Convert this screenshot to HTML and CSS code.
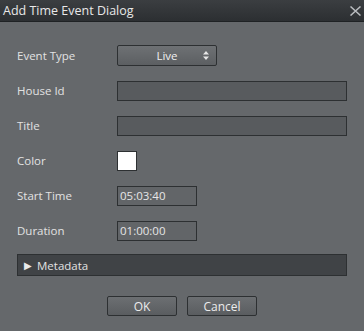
FILE: index.html
```html
<!DOCTYPE html>
<html lang="en">
<head>
  <meta charset="UTF-8">
  <title>Add Time Event Dialog</title>
  <link rel="stylesheet" href="styles.css">
</head>
<body>
  <div class="dialog">
    <!-- title bar -->
    <div class="titlebar">
      <span class="title">Add Time Event Dialog</span>
      <span class="close">
        <svg width="11" height="10" viewBox="0 0 11 10"><path d="M0.5 0.5 L10.5 9.5 M10.5 0.5 L0.5 9.5" stroke="#b9bcbf" stroke-width="1.5"/></svg>
      </span>
    </div>

    <div class="content">
      <div class="form">
        <label>Event Type</label>
        <div class="select">
          <span>Live</span>
          <svg class="arrows" width="6" height="9" viewBox="0 0 6 9"><path d="M3 0 L6 3.5 H0 Z M3 9 L6 5.5 H0 Z" fill="#e6e6e6"/></svg>
        </div>

        <label>House Id</label>
        <div class="input wide"></div>

        <label>Title</label>
        <div class="input wide"></div>

        <label>Color</label>
        <div class="swatch"></div>

        <label>Start Time</label>
        <div class="input short">05:03:40</div>

        <label>Duration</label>
        <div class="input short">01:00:00</div>
      </div>

      <div class="expander">
        <span class="tri">&#9654;</span> Metadata
      </div>

      <div class="buttons">
        <button class="btn">OK</button>
        <button class="btn">Cancel</button>
      </div>
    </div>
  </div>
</body>
</html>
```

FILE: styles.css
```css
* {
  margin: 0;
  padding: 0;
  box-sizing: border-box;
}
body {
  font-family: 'Open Sans', 'Noto Sans', sans-serif;
  font-size: 11.5px;
  background-color: #65686b;
  color: #e4e4e4;
}

.dialog {
  width: 364px;
  height: 331px;
  background-color: #65686b;
}

.titlebar {
  height: 22px;
  display: flex;
  align-items: center;
  justify-content: space-between;
  padding: 0 3px 0 3px;
  background: linear-gradient(#3b3e41, #2c2f32);
  border-bottom: 1px solid #1f2224;
}
.title {
  font-size: 12.5px;
  color: #e8e8e8;
}
.close {
  display: flex;
}

.content {
  padding: 16px 17px 0 17px;
}

.form {
  display: grid;
  grid-template-columns: 100px 1fr;
  grid-auto-rows: 35px;
  align-items: center;
}

label {
  color: #e2e2e2;
}

.select {
  width: 100px;
  height: 21px;
  border: 1px solid #2d3032;
  border-radius: 2px;
  background: linear-gradient(#6e7174, #5c5f62);
  display: flex;
  align-items: center;
  justify-content: center;
  position: relative;
  color: #f0f0f0;
}
.arrows {
  position: absolute;
  right: 7px;
  top: 5px;
}

.input {
  height: 20px;
  border: 1px solid #2d3032;
  background-color: #585b5e;
  padding-left: 2px;
  display: flex;
  align-items: center;
  color: #e6e6e6;
}
.wide {
  width: 230px;
}
.short {
  width: 80px;
  background-color: #626568;
}

.swatch {
  width: 20px;
  height: 20px;
  background-color: #fff;
  border: 1px solid #2d3032;
}

.expander {
  margin-top: 6px;
  height: 22px;
  width: 330px;
  background-color: #404346;
  border: 1px solid #2d3032;
  display: flex;
  align-items: center;
  padding-left: 6px;
  color: #e2e2e2;
}
.tri {
  font-size: 10px;
  margin-right: 5px;
  color: #eaeaea;
}

.buttons {
  display: flex;
  justify-content: center;
  gap: 10px;
  margin-top: 20px;
}
.btn {
  width: 70px;
  height: 20px;
  font-family: inherit;
  font-size: 12px;
  color: #ececec;
  border: 1px solid #2d3032;
  border-radius: 2px;
  background: linear-gradient(#6c6f72, #5a5d60);
}
```
